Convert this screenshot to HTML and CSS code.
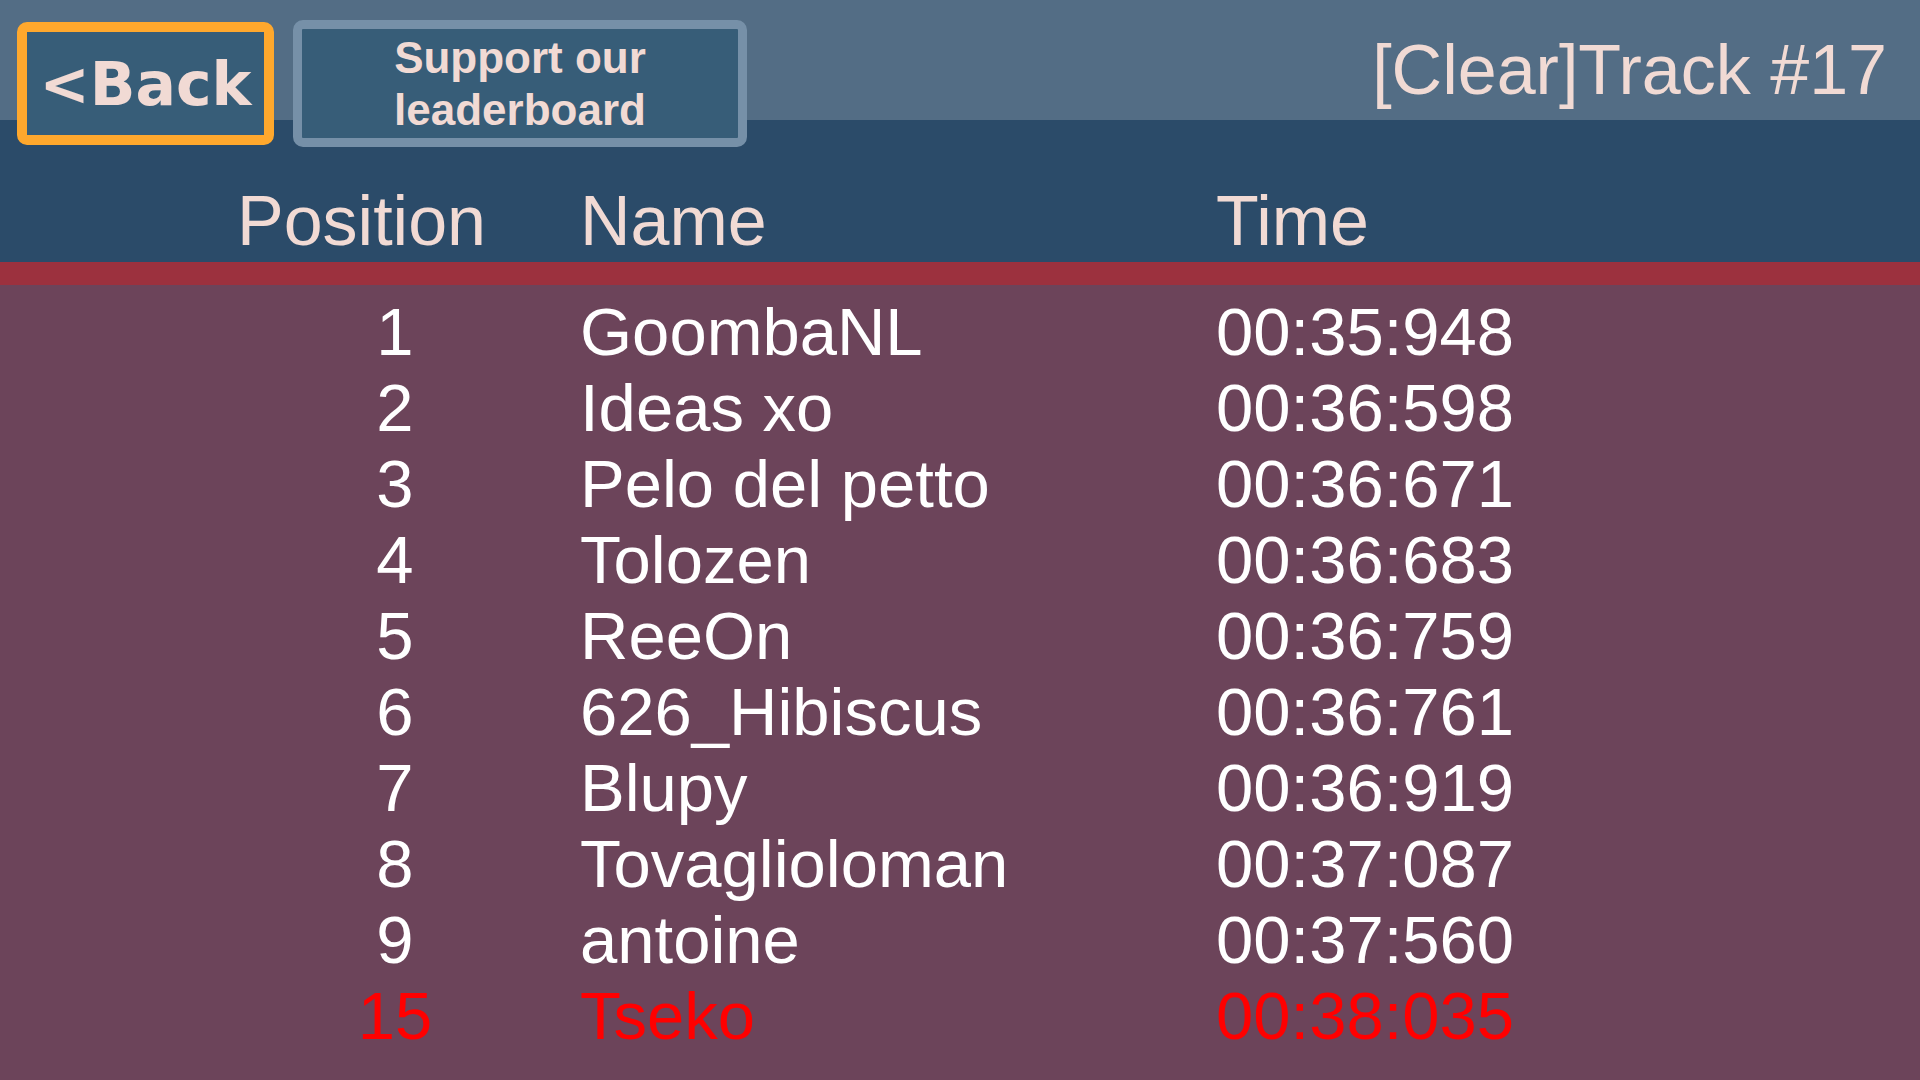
FILE: index.html
```html
<!DOCTYPE html>
<html lang="en">
<head>
<meta charset="utf-8">
<title>Leaderboard</title>
<link rel="stylesheet" href="styles.css">
</head>
<body>
<div class="screen">
  <header class="topbar">
    <button class="btn btn-back">&lt;Back</button>
    <button class="btn btn-support">Support our<br>leaderboard</button>
    <div class="track-title">[Clear]Track #17</div>
  </header>
  <div class="colhead">
    <div class="grid head-grid">
      <div class="h-pos">Position</div>
      <div>Name</div>
      <div>Time</div>
    </div>
  </div>
  <div class="divider"></div>
  <main class="board">
    <div class="grid row"><div class="pos">1</div><div>GoombaNL</div><div>00:35:948</div></div>
    <div class="grid row"><div class="pos">2</div><div>Ideas xo</div><div>00:36:598</div></div>
    <div class="grid row"><div class="pos">3</div><div>Pelo del petto</div><div>00:36:671</div></div>
    <div class="grid row"><div class="pos">4</div><div>Tolozen</div><div>00:36:683</div></div>
    <div class="grid row"><div class="pos">5</div><div>ReeOn</div><div>00:36:759</div></div>
    <div class="grid row"><div class="pos">6</div><div>626_Hibiscus</div><div>00:36:761</div></div>
    <div class="grid row"><div class="pos">7</div><div>Blupy</div><div>00:36:919</div></div>
    <div class="grid row"><div class="pos">8</div><div>Tovaglioloman</div><div>00:37:087</div></div>
    <div class="grid row"><div class="pos">9</div><div>antoine</div><div>00:37:560</div></div>
    <div class="grid row row-me"><div class="pos">15</div><div>Tseko</div><div>00:38:035</div></div>
  </main>
</div>
</body>
</html>
```

FILE: styles.css
```css
html, body {
  margin: 0;
  padding: 0;
}
body {
  width: 1920px;
  height: 1080px;
  overflow: hidden;
  background: #6c445a;
  font-family: "Liberation Sans", Arial, sans-serif;
}
.screen {
  width: 1920px;
  height: 1080px;
  display: flex;
  flex-direction: column;
}
.topbar {
  position: relative;
  z-index: 1;
  height: 120px;
  flex: 0 0 120px;
  background: #536d85;
  display: flex;
  align-items: flex-start;
  padding-left: 17px;
  padding-right: 33px;
}
.btn {
  font-family: "Liberation Sans", Arial, sans-serif;
  font-weight: bold;
  color: #f1dad4;
  background: #375d78;
  border-style: solid;
  border-radius: 10px;
  padding: 0;
  display: flex;
  align-items: center;
  justify-content: center;
  text-align: center;
  box-sizing: border-box;
  flex: 0 0 auto;
}
.btn-back {
  margin-top: 22px;
  width: 257px;
  height: 123px;
  border-width: 10px;
  border-color: #ffa82d;
  font-family: "DejaVu Sans", Verdana, sans-serif;
  font-size: 60px;
  line-height: 60px;
}
.btn-support {
  margin-top: 20px;
  margin-left: 19px;
  width: 454px;
  height: 127px;
  border-width: 9px;
  border-color: #7690a8;
  font-size: 44px;
  line-height: 52px;
}
.track-title {
  margin-left: auto;
  margin-top: 35px;
  font-size: 70px;
  line-height: 70px;
  color: #f1dad4;
  white-space: nowrap;
}
.colhead {
  flex: 0 0 142px;
  height: 142px;
  box-sizing: border-box;
  background: #2b4b69;
  padding-top: 66px;
}
.grid {
  display: grid;
  grid-template-columns: 316px 609px auto;
  column-gap: 27px;
  margin-left: 237px;
  white-space: nowrap;
}
.head-grid {
  font-size: 70px;
  line-height: 70px;
  color: #f1dad4;
}
.divider {
  flex: 0 0 23px;
  height: 23px;
  background: #9c313e;
}
.board {
  flex: 1 1 auto;
  padding-top: 9px;
  background: #6c445a;
}
.row {
  font-size: 67px;
  line-height: 76px;
  height: 76px;
  color: #ffffff;
}
.pos {
  text-align: center;
}
.row-me {
  color: #ff0000;
}
```
